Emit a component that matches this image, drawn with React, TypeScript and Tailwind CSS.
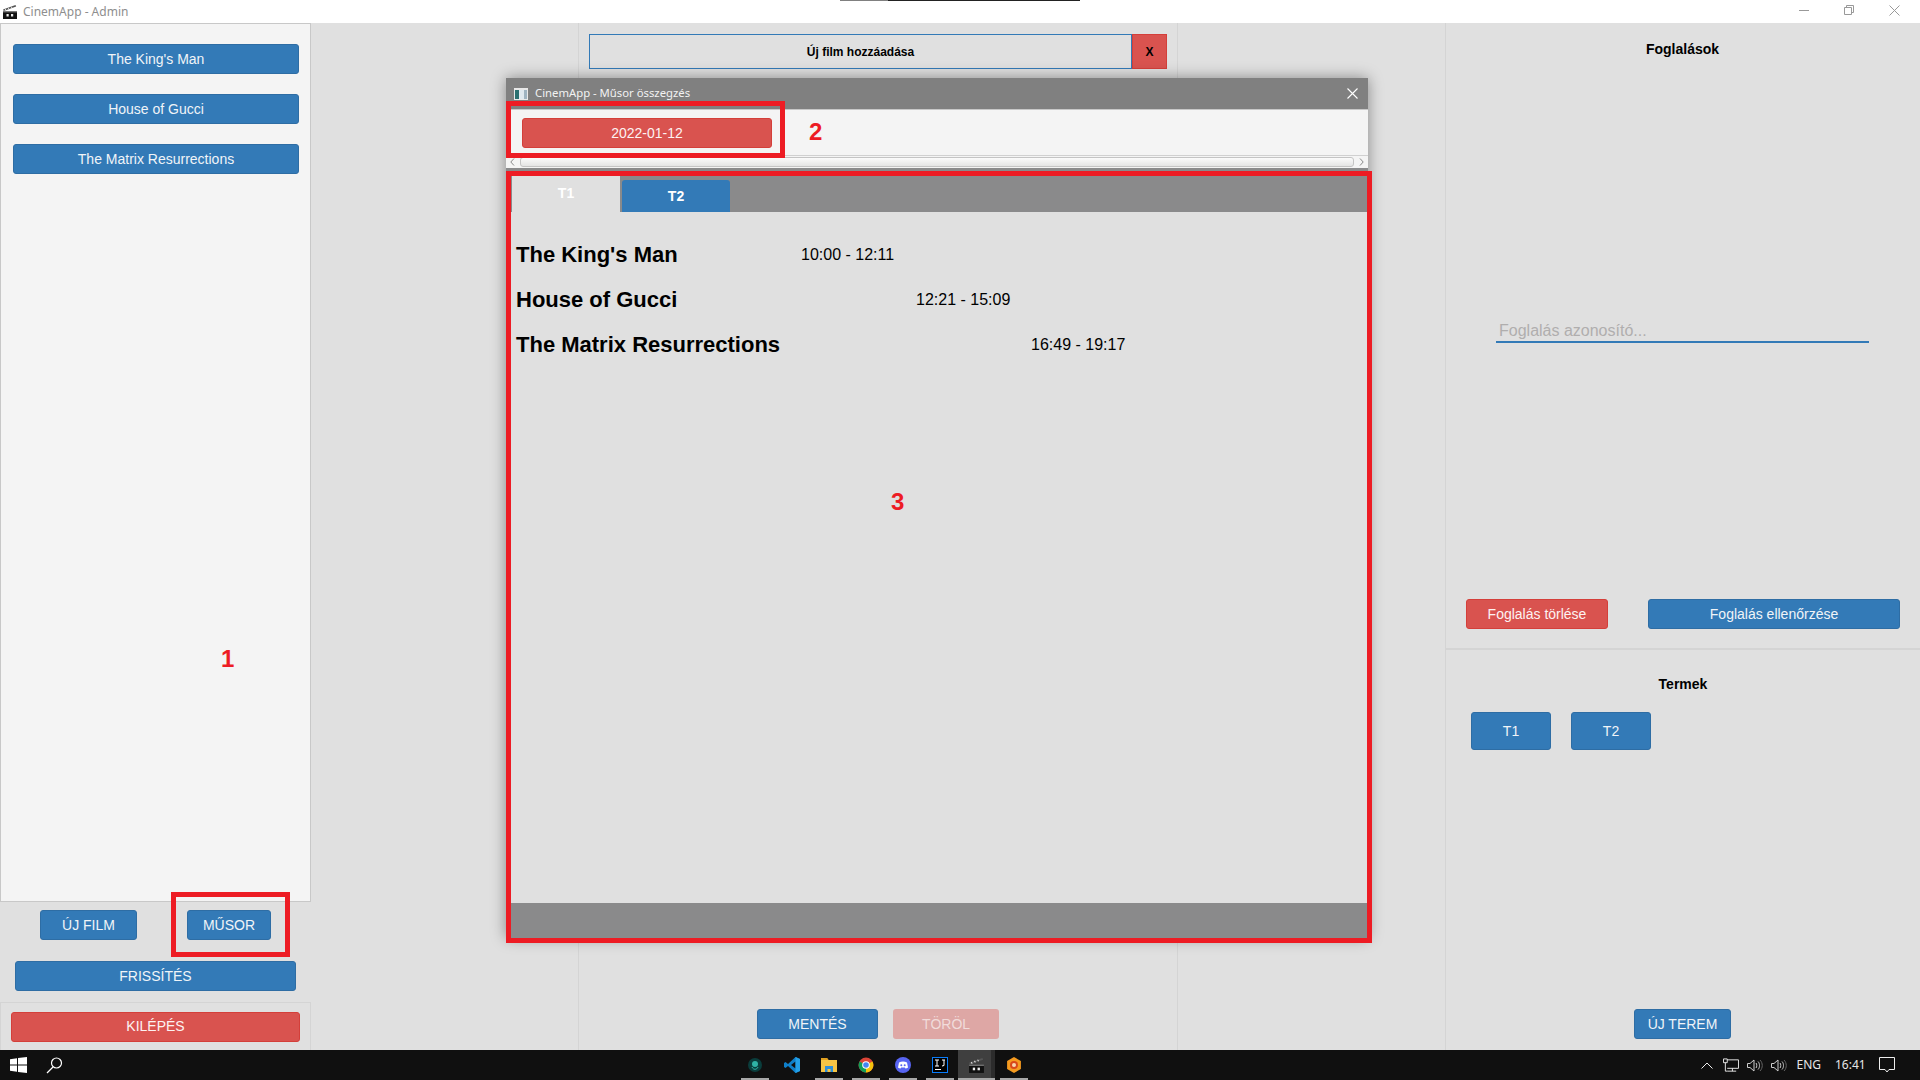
import React from "react";

const font = "font-['Liberation_Sans',Arial,sans-serif]";
const blue = "rounded-[3px] border border-[#2e6da4] bg-[#337ab7] text-[#f0f4f8] flex items-center justify-center";
const red = "rounded-[3px] border border-[#d43f3a] bg-[#d9534f] text-[#fdf2f2] flex items-center justify-center";

function Clapper({ size = 16 }: { size?: number }) {
  return (
    <svg width={size} height={size} viewBox="0 0 16 16">
      <path d="M1 5.500 13.500 1l.7 1.600L1.700 7z" fill="#555" />
      <path d="M3 4.800 4 6.200M6 3.700 7 5.100M9 2.600 10 4" stroke="#ddd" strokeWidth="1" />
      <rect x="1" y="7" width="14" height="8" fill="#111" />
      <rect x="1" y="7" width="14" height="1.400" fill="#777" />
      <rect x="4.500" y="10" width="2.200" height="2.500" fill="#eee" />
      <rect x="9" y="10" width="2.200" height="2.500" fill="#eee" />
    </svg>
  );
}

function TaskIcon({ children, on, active }: { children: React.ReactNode; on?: boolean; active?: boolean }) {
  return (
    <div className={`relative flex h-[30px] w-[37px] items-center justify-center ${active ? "bg-[#3f3f3f]" : ""}`}>
      {active && <div className="absolute right-0 top-0 h-full w-[4px] bg-[#2c2c2c]" />}
      <div className="relative flex">{children}</div>
      {on && <div className={`absolute bottom-0 h-[2px] ${active ? "left-0 w-[37px]" : "left-[5px] w-[28px]"} bg-[#a8a8a8]`} />}
    </div>
  );
}

function Speaker() {
  return (
    <svg className="ml-[8px]" width="16" height="13" viewBox="0 0 16 13" fill="none" stroke="#ccc">
      <path d="M.5 4.500H3L7 1V12L3 8.500H.5zM9 4c1 1 1 4 0 5M11 2.500c2 2 2 6 0 8" />
      <path d="M13 1c3 3 3 8 0 11" stroke="#666" />
    </svg>
  );
}

function Taskbar() {
  return (
    <div className="flex h-[30px] items-center justify-between bg-[#101010]">
      <div className="flex items-center">
        <div className="flex w-[36px] justify-center">
          <svg width="17" height="16" viewBox="0 0 17 16"><path d="M0 2.300 7 1.200V7.400H0zM8 1 17 0V7.400H8zM0 8.400H7V14.800L0 13.700zM8 8.400H17V16L8 14.900z" fill="#fff" /></svg>
        </div>
        <div className="ml-[8px] flex w-[20px] justify-center">
          <svg width="17" height="17" viewBox="0 0 17 17" fill="none" stroke="#fff" strokeWidth="1.200"><circle cx="10.500" cy="6" r="5" /><path d="M7 10 1 16" /></svg>
        </div>
      </div>
      <div className="ml-[672px] flex items-center">
        <TaskIcon on>
          <svg width="16" height="16" viewBox="0 0 16 16"><circle cx="8" cy="8" r="7" fill="#0a3d3c" /><circle cx="8" cy="7" r="3" fill="#2fb3a6" /><path d="M5 10c1 3 5 3 6 0" stroke="#2fb3a6" fill="none" /></svg>
        </TaskIcon>
        <TaskIcon>
          <svg width="16" height="16" viewBox="0 0 16 16"><path d="M11.500 0 16 2v12l-4.500 2L4 9l-2.500 2L0 10V6l1.500-1L4 7z" fill="#0f7fc9" /><path d="M11.500 4.500v7L7 8z" fill="#101010" /><path d="M11.500 0 16 2v12l-4.500 2z" fill="#23a0e8" /></svg>
        </TaskIcon>
        <TaskIcon on>
          <svg width="16" height="16" viewBox="0 0 16 16"><path d="M0 1h6l1.500 2H16v12H0z" fill="#f6c445" /><path d="M0 1h6l1.500 2H0z" fill="#e0a020" /><path d="M4 9h8v6h-2.500v-3h-3v3H4z" fill="#2e8fd8" /></svg>
        </TaskIcon>
        <TaskIcon on>
          <svg width="16" height="16" viewBox="0 0 16 16"><circle cx="8" cy="8" r="7.500" fill="#db4437" /><path d="M8 8 14.500 4.500A7.500 7.500 0 0 1 8 15.500z" fill="#f4c20d" /><path d="M8 8 8 15.500A7.500 7.500 0 0 1 1.500 4.500z" fill="#0f9d58" /><circle cx="8" cy="8" r="3.800" fill="#fff" /><circle cx="8" cy="8" r="2.800" fill="#4285f4" /></svg>
        </TaskIcon>
        <TaskIcon on>
          <svg width="16" height="16" viewBox="0 0 16 16"><circle cx="8" cy="8" r="8" fill="#5865f2" /><path d="M4 5.500c2.500-1.200 5.500-1.200 8 0l1 5c-1 .8-2 1-2.500 1l-.7-1H6.200l-.7 1c-.5 0-1.500-.2-2.500-1z" fill="#fff" /><circle cx="6.300" cy="8.200" r="1" fill="#5865f2" /><circle cx="9.700" cy="8.200" r="1" fill="#5865f2" /></svg>
        </TaskIcon>
        <TaskIcon on>
          <svg width="16" height="16" viewBox="0 0 16 16"><rect x=".5" y=".5" width="15" height="15" fill="#000" stroke="#087cfa" /><path d="M3 3h4M5 3v6M3 9h4M10 3h3M12 3v5.500L10 9" stroke="#fff" fill="none" /><path d="M3 12.500h6" stroke="#fff" /></svg>
        </TaskIcon>
        <TaskIcon on active><Clapper size={17} /></TaskIcon>
        <TaskIcon on>
          <svg width="16" height="16" viewBox="0 0 16 16"><path d="M8 0 14.900 4v8L8 16 1.100 12V4z" fill="#f59a1f" /><circle cx="8" cy="8" r="4" fill="#d9481c" /><circle cx="8" cy="8" r="2" fill="#f8d7b0" /></svg>
        </TaskIcon>
      </div>
      <div className="ml-auto flex items-center text-[12px] text-[#e6e6e6] font-['Noto_Sans',sans-serif]">
        <svg width="12" height="7" viewBox="0 0 12 7" fill="none" stroke="#eee"><path d="M.5 6.500 6 1l5.500 5.500" /></svg>
        <svg className="ml-[10px]" width="16" height="15" viewBox="0 0 17 15" fill="none" stroke="#eee"><path d="M4.500 1.500H16.500V10.500H4.500M10 10.500V13.500M5 13.500H14M.5.500H4.500V4.500H.5zM2.500 4.500V13.500H5" /></svg>
        <Speaker />
        <Speaker />
        <span className="ml-[9px]">ENG</span>
        <span className="ml-[14px] w-[26px]">16:41</span>
        <svg className="ml-[18px] mr-[25px]" width="16" height="16" viewBox="0 0 16 16" fill="none" stroke="#eee"><path d="M.5.500H15.500V12.500H10L8 15 6 12.500H.5z" /></svg>
      </div>
    </div>
  );
}

function Modal() {
  return (
    <div className={`absolute left-[506px] top-[78px] flex h-[860px] w-[862px] flex-col shadow-[0_0_14px_rgba(0,0,0,0.4)] ${font}`}>
      <div className="flex h-[31px] items-center justify-between bg-[#808080] pl-[8px] pr-[10px] text-[11.3px] text-[#f2f2f2] font-['Noto_Sans',sans-serif]">
        <div className="flex items-center gap-[7px]">
          <svg width="14" height="12" viewBox="0 0 14 12"><rect width="14" height="12" fill="#e8e8e8" /><rect x="1" y="2" width="4" height="9" fill="#2a6f6f" /><rect x="5" y="2" width="5" height="9" fill="#dfe8ee" /><rect x="10" y="2" width="3" height="9" fill="#9fb3c0" /></svg>
          <span>CinemApp - Műsor összegzés</span>
        </div>
        <svg width="11" height="11" viewBox="0 0 11 11" stroke="#fff" strokeWidth="1.100"><path d="M.5.500 10.500 10.500M10.500.500.500 10.500" /></svg>
      </div>
      <div className="flex h-[46px] items-center border-t border-[#c8c8c8] bg-[#f4f4f4] pl-[16px] pt-[1px]">
        <div className={`${red} h-[30px] w-[250px] text-[14px]`}>2022-01-12</div>
      </div>
      <div className="flex h-[13px] items-center justify-between border-t border-[#d0d0d0] bg-[#f4f4f4] px-[4px] text-[#888]">
        <svg width="5" height="8" viewBox="0 0 5 8" fill="none" stroke="#888"><path d="M4 .500.800 4 4 7.500" /></svg>
        <div className="mx-[5px] h-[10px] flex-1 rounded-[3px] border border-[#c4c4c4] bg-gradient-to-b from-[#fbfbfb] to-[#e4e4e4]" />
        <svg width="5" height="8" viewBox="0 0 5 8" fill="none" stroke="#888"><path d="M1 .500 4.200 4 1 7.500" /></svg>
      </div>
      <div className="h-[8px] bg-[#8a8a8b]" />
      <div className="flex h-[36px] items-end bg-[#8a8a8b] pl-[6px]">
        <div className="flex h-[36px] w-[108px] justify-center bg-[#e0e0e0] pt-[9px] text-[14px] font-bold leading-[16px] text-white">T1</div>
        <div className="ml-[2px] flex h-[32px] w-[108px] items-center justify-center rounded-t-[3px] bg-[#337ab7] text-[14px] font-bold text-white">T2</div>
      </div>
      <div className="mx-[5px] flex flex-1 flex-col gap-[20px] bg-[#e0e0e0] px-[5px] pt-[30px] text-black">
        <div className="flex h-[25px] items-center"><b className="w-[285px] text-[22px] leading-[25px]">The King's Man</b><span className="text-[16px]">10:00 - 12:11</span></div>
        <div className="flex h-[25px] items-center"><b className="w-[400px] text-[22px] leading-[25px]">House of Gucci</b><span className="text-[16px]">12:21 - 15:09</span></div>
        <div className="flex h-[25px] items-center"><b className="w-[515px] text-[22px] leading-[25px]">The Matrix Resurrections</b><span className="text-[16px]">16:49 - 19:17</span></div>
      </div>
      <div className="h-[35px] bg-[#8a8a8b]" />
    </div>
  );
}

export default function App() {
  return (
    <div className={`relative flex h-[1080px] w-[1920px] flex-col overflow-hidden bg-[#e0e0e0] ${font}`}>
      <div className="flex h-[23px] items-center bg-white pl-[2px] text-[12px] text-[#8e8e8e] font-['Noto_Sans',sans-serif]">
        <Clapper />
        <span className="ml-[5px]">CinemApp - Admin</span>
        <div className="ml-auto flex items-center gap-[35px] pr-[20px] pb-[3px]">
          <svg width="10" height="10" viewBox="0 0 10 10" stroke="#999"><path d="M0 5.500H10" /></svg>
          <svg width="10" height="10" viewBox="0 0 10 10" fill="none" stroke="#999"><path d="M.5 2.500H7.500V9.500H.5zM2.500 2.500V.5H9.500V7.500H7.500" /></svg>
          <svg width="11" height="11" viewBox="0 0 11 11" stroke="#999"><path d="M.5.500 10.500 10.500M10.500.500.500 10.500" /></svg>
        </div>
      </div>

      <div className="flex h-[1027px]">
        <div className="flex w-[311px] flex-col">
          <div className="flex h-[879px] flex-col gap-[20px] border border-[#c8c8c8] bg-[#f4f4f4] pl-[12px] pr-[11px] pt-[20px] text-[14px]">
            <div className={`${blue} h-[30px]`}>The King's Man</div>
            <div className={`${blue} h-[30px]`}>House of Gucci</div>
            <div className={`${blue} h-[30px]`}>The Matrix Resurrections</div>
          </div>
          <div className="flex h-[100px] flex-col pt-[8px] text-[14px]">
            <div className="flex h-[30px] pl-[40px]">
              <div className={`${blue} w-[97px]`}>ÚJ FILM</div>
              <div className={`${blue} ml-[50px] w-[84px]`}>MŰSOR</div>
            </div>
            <div className={`${blue} ml-[15px] mt-[21px] h-[30px] w-[281px]`}>FRISSÍTÉS</div>
          </div>
          <div className="flex h-[48px] items-center border border-b-0 border-[#d4d4d4] pl-[10px] text-[14px]">
            <div className={`${red} h-[30px] w-[289px]`}>KILÉPÉS</div>
          </div>
        </div>

        <div className="ml-[267px] flex w-[600px] flex-col justify-between border-x border-[#d4d4d4] px-[10px] pt-[11px] pb-[11px]">
          <div className="flex h-[35px]">
            <div className="flex flex-1 items-center justify-center border border-[#337ab7] text-[12px] font-bold text-black">Új film hozzáadása</div>
            <div className="flex w-[35px] items-center justify-center border border-[#d43f3a] bg-[#d9534f] text-[12px] font-bold text-black">X</div>
          </div>
          <div className="flex justify-center gap-[15px] text-[14px]">
            <div className={`${blue} h-[30px] w-[121px]`}>MENTÉS</div>
            <div className="flex h-[30px] w-[106px] items-center justify-center rounded-[3px] bg-[#dea7a5] text-[#f1dcdb]">TÖRÖL</div>
          </div>
        </div>

        <div className="ml-[267px] flex w-[475px] flex-col border-l border-[#d4d4d4]">
          <div className="flex h-[627px] flex-col border-b-2 border-[#d4d4d4] pl-[20px] pr-[21px]">
            <div className="pt-[18px] text-center text-[14px] font-bold leading-[16px] text-black">Foglalások</div>
            <div className="ml-[30px] mt-[262px] h-[24px] w-[373px] border-b-2 border-[#337ab7] pl-[3px] text-[16px] leading-[24px] text-[#b0aeae]">Foglalás azonosító...</div>
            <div className="mt-[256px] -mr-px flex h-[30px] justify-between text-[14px]">
              <div className={`${red} w-[142px]`}>Foglalás törlése</div>
              <div className={`${blue} w-[252px]`}>Foglalás ellenőrzése</div>
            </div>
          </div>
          <div className="flex flex-1 flex-col px-[25px] pb-[11px]">
            <div className="pt-[26px] text-center text-[14px] font-bold leading-[16px] text-black">Termek</div>
            <div className="mt-[20px] flex gap-[20px] text-[14px]">
              <div className={`${blue} h-[38px] w-[80px]`}>T1</div>
              <div className={`${blue} h-[38px] w-[80px]`}>T2</div>
            </div>
            <div className={`${blue} ml-[163px] mt-auto h-[30px] w-[97px] text-[14px]`}>ÚJ TEREM</div>
          </div>
        </div>
      </div>

      <Taskbar />

      <div className="absolute left-[840px] top-0 h-px w-[48px] bg-[#808080]" />
      <div className="absolute left-[888px] top-0 h-px w-[192px] bg-[#222]" />

      <Modal />

      <div className="absolute left-[171px] top-[892px] h-[65px] w-[119px] border-[5px] border-[#ed1c24]" />
      <div className="absolute left-[506px] top-[101px] h-[57px] w-[279px] border-[5px] border-[#ed1c24]" />
      <div className="absolute left-[506px] top-[171px] h-[772px] w-[866px] border-[5px] border-[#ed1c24]" />
      <span className="absolute left-[221px] top-[645px] text-[24px] font-bold leading-[28px] text-[#ed1c24]">1</span>
      <span className="absolute left-[809px] top-[118px] text-[24px] font-bold leading-[28px] text-[#ed1c24]">2</span>
      <span className="absolute left-[891px] top-[488px] text-[24px] font-bold leading-[28px] text-[#ed1c24]">3</span>
    </div>
  );
}
